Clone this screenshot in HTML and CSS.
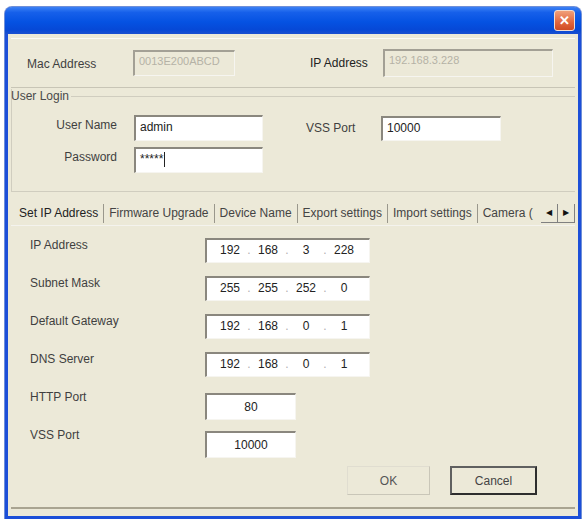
FILE: index.html
```html
<!DOCTYPE html>
<html lang="en">
<head>
  <meta charset="UTF-8" />
  <title>Device Settings</title>
  <link rel="stylesheet" href="styles.css">
</head>
<body>
  <div class="window">
    <div class="titlebar">
      <span class="close-button">&#x2715;</span>
    </div>
    <div class="client">

      <div class="group top-group">
        <span class="label mac-label">Mac Address</span>
        <span class="textbox disabled mac-box">0013E200ABCD</span>
        <span class="label ip-label">IP Address</span>
        <span class="textbox disabled ip-box">192.168.3.228</span>
      </div>

      <div class="group login-group">
        <div class="legend"><span>User Login</span></div>
        <div class="login-row">
          <span class="label login-label">User Name</span>
          <span class="textbox login-box">admin</span>
          <span class="label port-label">VSS Port</span>
          <span class="textbox port-box">10000</span>
        </div>
        <div class="login-row">
          <span class="label login-label">Password</span>
          <span class="textbox login-box">*****<span class="caret"></span></span>
        </div>
      </div>

      <div class="tabs">
        <span class="tab active">Set IP Address</span>
        <span class="tab">Firmware Upgrade</span>
        <span class="tab">Device Name</span>
        <span class="tab">Export settings</span>
        <span class="tab">Import settings</span>
        <span class="tab last">Camera (</span>
        <span class="tab-arrows">
          <span class="arrow">&#9664;</span>
          <span class="arrow">&#9654;</span>
        </span>
      </div>

      <div class="panel">
        <div class="field-row">
          <span class="label field-label">IP Address</span>
          <span class="textbox ipbox">
            <span class="octet">192</span><span class="dot">.</span>
            <span class="octet">168</span><span class="dot">.</span>
            <span class="octet">3</span><span class="dot">.</span>
            <span class="octet">228</span>
          </span>
        </div>
        <div class="field-row">
          <span class="label field-label">Subnet Mask</span>
          <span class="textbox ipbox">
            <span class="octet">255</span><span class="dot">.</span>
            <span class="octet">255</span><span class="dot">.</span>
            <span class="octet">252</span><span class="dot">.</span>
            <span class="octet">0</span>
          </span>
        </div>
        <div class="field-row">
          <span class="label field-label">Default Gateway</span>
          <span class="textbox ipbox">
            <span class="octet">192</span><span class="dot">.</span>
            <span class="octet">168</span><span class="dot">.</span>
            <span class="octet">0</span><span class="dot">.</span>
            <span class="octet">1</span>
          </span>
        </div>
        <div class="field-row">
          <span class="label field-label">DNS Server</span>
          <span class="textbox ipbox">
            <span class="octet">192</span><span class="dot">.</span>
            <span class="octet">168</span><span class="dot">.</span>
            <span class="octet">0</span><span class="dot">.</span>
            <span class="octet">1</span>
          </span>
        </div>
        <div class="field-row">
          <span class="label field-label">HTTP Port</span>
          <span class="textbox numbox">80</span>
        </div>
        <div class="field-row">
          <span class="label field-label">VSS Port</span>
          <span class="textbox numbox">10000</span>
        </div>
        <div class="buttons">
          <button class="button">OK</button>
          <button class="button default">Cancel</button>
        </div>
      </div>

    </div>
  </div>
</body>
</html>
```

FILE: styles.css
```css
body {
  margin: 0;
  background-color: #ffffff;
  font-family: "Liberation Sans", Arial, sans-serif;
  font-size: 12px;
  color: #3f3f3f;
}
.window {
  box-sizing: border-box;
  width: 576px;
  height: 512px;
  margin: 7px 0 0 5px;
  border: 3px solid #1c4fd8;
  border-top: none;
  border-radius: 7px 7px 0 0;
  background-color: #ece9d8;
  display: flex;
  flex-direction: column;
  box-shadow: 0 0 0 1px #6f8fd8;
}
.titlebar {
  height: 27px;
  margin: 0 -3px;
  border-radius: 7px 7px 0 0;
  background: linear-gradient(to bottom, #3d82f5 0%, #1660ea 20%, #0552e2 55%, #0648d6 85%, #1a4fcf 100%);
  display: flex;
  justify-content: flex-end;
  align-items: center;
  padding-right: 6px;
}
.close-button {
  width: 19px;
  height: 19px;
  border: 1px solid #f3ddd0;
  border-radius: 3px;
  background: linear-gradient(to bottom, #f0a07a, #e2653d 60%, #cf4b25);
  color: #ffffff;
  font-size: 13px;
  font-weight: bold;
  display: flex;
  align-items: center;
  justify-content: center;
  line-height: 1;
}
.client {
  flex: 1;
  padding: 0 3px;
  display: flex;
  flex-direction: column;
}
.label {
  white-space: nowrap;
}
.textbox {
  box-sizing: border-box;
  height: 26px;
  background-color: #ffffff;
  border-top: 2px solid #8a877e;
  border-left: 2px solid #8a877e;
  border-bottom: 1px solid #f6f5f0;
  border-right: 1px solid #f6f5f0;
  padding: 3px 4px 0;
  color: #222222;
  display: inline-flex;
  align-items: flex-start;
}
.textbox.disabled {
  background-color: #ece9d8;
  color: #b5b2a6;
  border-top-color: #a3a095;
  border-left-color: #a3a095;
  font-size: 11px;
}
.top-group {
  margin-top: 4px;
  height: 50px;
  box-sizing: border-box;
  border-top: 1px solid #faf9f4;
  border-bottom: 1px solid #c8c5b6;
  display: flex;
  align-items: center;
  padding-left: 16px;
}
.mac-label {
  width: 106px;
  margin-top: 2px;
}
.mac-box {
  width: 102px;
}
.ip-label {
  width: 73px;
  margin-left: 75px;
  color: #222222;
}
.ip-box {
  width: 170px;
  height: 28px;
}
.login-group {
  margin-top: 1px;
  height: 103px;
  box-sizing: border-box;
  border-left: 1px solid #d0cdbf;
  border-bottom: 1px solid #d0cdbf;
}
.legend {
  display: flex;
  align-items: center;
  height: 14px;
  margin-left: -1px;
  margin-bottom: 12px;
  color: #4a4a4a;
}
.legend::after {
  content: "";
  flex: 1;
  height: 1px;
  margin-left: 2px;
  background-color: #d0cdbf;
}
.login-row {
  display: flex;
  align-items: flex-start;
  margin-bottom: 6px;
}
.login-label {
  text-align: right;
  padding-top: 3px;
  padding-right: 17px;
  box-sizing: border-box;
  width: 122px;
}
.login-box {
  width: 129px;
  height: 26px;
}
.caret {
  display: inline-block;
  width: 1px;
  height: 15px;
  background-color: #222222;
  margin-left: 1px;
}
.port-label {
  width: 75px;
  margin-left: 43px;
  padding-top: 6px;
}
.port-box {
  width: 120px;
  height: 25px;
  margin-top: 1px;
}
.tabs {
  margin-top: 10px;
  height: 23px;
  display: flex;
  align-items: center;
  padding-left: 8px;
  border-bottom: 1px solid #f4f3ee;
}
.tab {
  flex-shrink: 0;
  white-space: nowrap;
  padding: 0 5px;
  border-right: 1px solid #9a978c;
  height: 19px;
  line-height: 19px;
  color: #444444;
}
.tab.active {
  color: #222222;
  padding-left: 0;
  padding-right: 5px;
}
.tab.last {
  border-right: none;
  padding-right: 2px;
}
.tab-arrows {
  flex-shrink: 0;
  display: flex;
  margin-left: auto;
}
.arrow {
  width: 16px;
  height: 18px;
  border-bottom: 1px solid #808080;
  border-right: 1px solid #808080;
  font-size: 8px;
  line-height: 18px;
  text-align: center;
  color: #111111;
}
.panel {
  flex: 1;
  margin-bottom: 7px;
  border-bottom: 2px solid #a9a491;
  padding: 12px 0 0 19px;
  display: flex;
  flex-direction: column;
}
.field-row {
  display: flex;
  align-items: flex-start;
  height: 38px;
}
.field-label {
  width: 175px;
}
.ipbox {
  width: 165px;
  height: 25px;
  margin-top: 0;
  padding: 3px 0 0 10px;
}
.octet {
  width: 26px;
  text-align: center;
}
.dot {
  width: 12px;
  text-align: center;
  color: #b0b0b0;
}
.numbox {
  width: 91px;
  height: 27px;
  margin-top: 3px;
  justify-content: center;
  padding-top: 5px;
}
.buttons {
  display: flex;
  justify-content: flex-end;
  gap: 20px;
  margin-top: 0;
  padding-right: 38px;
}
.button {
  font-family: "Liberation Sans", Arial, sans-serif;
  font-size: 12px;
  color: #555555;
  background-color: #ece9d8;
  height: 29px;
  width: 83px;
  border: 1px solid #e0ddd0;
  border-right-color: #c9c6b8;
  border-bottom-color: #c9c6b8;
}
.button.default {
  width: 87px;
  border: 2px solid #2e2e2e;
  border-top-color: #606060;
  border-left-color: #606060;
  color: #444444;
}
```
